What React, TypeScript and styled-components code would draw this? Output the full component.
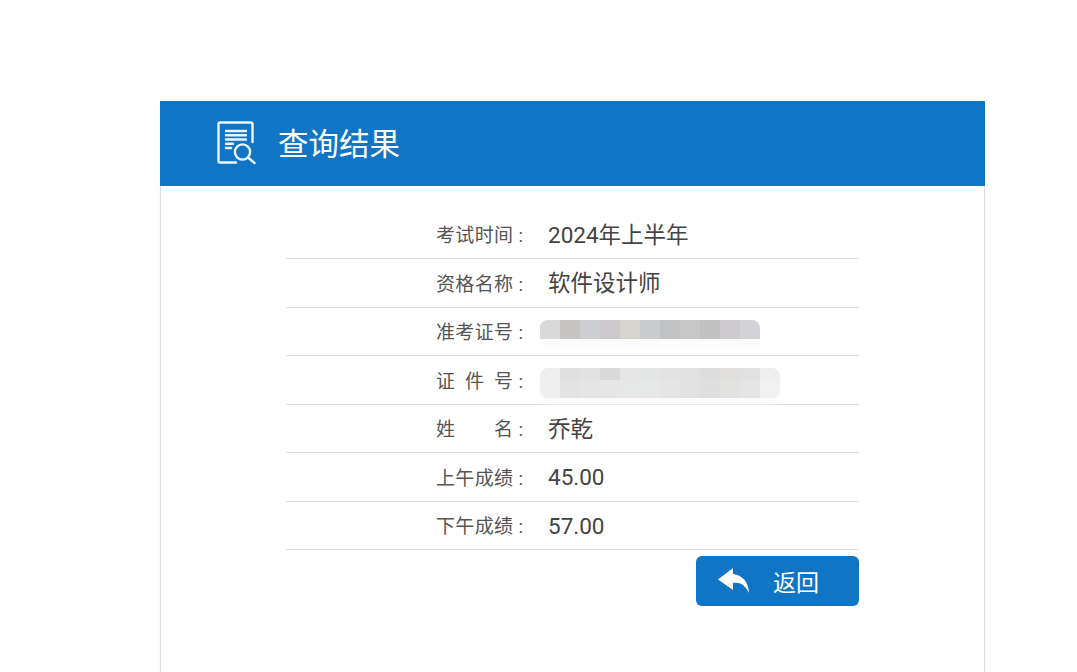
import styled, { createGlobalStyle } from 'styled-components';

const GlobalStyle = createGlobalStyle`
	html, body {
		margin: 0;
		padding: 0;
		background: #fff;
		height: 100%;
		overflow: hidden;
	}
`;

const Page = styled.div`
	padding: 101px 92px 0 160px;
	height: 672px;
	box-sizing: border-box;
	font-family: Roboto, "Noto Sans CJK SC", sans-serif;
`;

const Card = styled.div`
	width: 825px;
	height: 571px;
	display: flex;
	flex-direction: column;
`;

const Header = styled.div`
	position: relative;
	height: 85px;
	flex: none;
	padding: 0 0 3px 57px;
	box-sizing: border-box;
	background: #1075c4;
	display: flex;
	align-items: center;
	gap: 22px;
	color: #fff;
	font-size: 30.5px;
`;

const HeaderIcon = styled.svg`
	margin-top: 2px;
`;

const Panel = styled.div`
	flex: 1;
	border-left: 1px solid #e0e0e0;
	border-right: 1px solid #e0e0e0;
	box-shadow: 0 0 6px rgba(0, 0, 0, 0.04);
	padding: 24px 0 0 125px;
`;

const Body = styled.div`
	width: 573px;
`;

const Row = styled.div`
	height: 48px;
	border-bottom: 1px solid #dcdcdc;
	display: flex;
	align-items: center;
	margin-bottom: -0.5px;
`;

const Label = styled.div`
	width: 239px;
	padding: 4px 2px 0 0;
	box-sizing: border-box;
	display: flex;
	justify-content: flex-end;
	align-items: baseline;
	font-size: 19px;
	line-height: 26px;
	color: #555;
`;

const LabelText = styled.span`
	width: 77px;
	text-align: justify;
	text-align-last: justify;
`;

const Colon = styled.span`
	width: 10px;
	text-align: right;
`;

const Value = styled.div`
	margin-left: 23px;
	padding-top: 1px;
	font-size: 22.5px;
	line-height: 30px;
	color: #444;
`;

const Mosaic = styled.div<{ $top: number; $radius: string }>`
	align-self: flex-start;
	margin: ${(p) => p.$top}px 0 0 15px;
	border-radius: ${(p) => p.$radius};
	overflow: hidden;
	box-shadow: 0 6px 6px #fbfbfb;
`;

const MosaicRow = styled.div<{ $height: number }>`
	display: flex;
	height: ${(p) => p.$height}px;
`;

const Tile = styled.div<{ $color: string }>`
	width: 20px;
	background: ${(p) => p.$color};
`;

const Actions = styled.div`
	display: flex;
	justify-content: flex-end;
	padding-top: 6px;
`;

const BackButton = styled.button`
	width: 163px;
	height: 50px;
	border: none;
	border-radius: 6px;
	background: #1075c4;
	color: #fff;
	font-family: inherit;
	font-size: 23px;
	display: flex;
	align-items: center;
	padding: 0 0 0 22px;
	gap: 23px;
`;

function ResultIcon() {
	return (
		<HeaderIcon width="39" height="44" viewBox="0 0 39 44" fill="none" stroke="#f0f6fb" strokeWidth="2.4" strokeLinecap="round">
			<path d="M19 41.500H3a1.500 1.500 0 0 1-1.500-1.500V3A1.500 1.500 0 0 1 3 1.500h31A1.500 1.500 0 0 1 35.500 3v18" />
			<path d="M9 10h20M9 14.300h20M9 18.500h20M9 22.800h7M9 27h5" />
			<circle cx="25.500" cy="31" r="7.600" />
			<path d="M31 36.500l6.500 5.500" />
		</HeaderIcon>
	);
}

function ReplyIcon() {
	return (
		<svg width="32" height="25" viewBox="0 0 32 25" fill="#fff">
			<path d="M15 0L0 11.500 15 22v-7c7-1 12 2 16 10 0-3-1-17-16-19z" />
		</svg>
	);
}

const idTiles = [
	['#d9d9da', '#c6c5c3', '#ccced1', '#cbc9cc', '#d7d4d0', '#c9cbcd', '#c1c2c4', '#c6c6c7', '#c1c1c1', '#cdcbcd', '#d1d3d6'],
];

const certTiles = [
	['#efefef', '#e0e0e0', '#e2e2e2', '#dadada', '#e6e6e6', '#e4e6e6', '#e4e3e1', '#e1e1e1', '#dddddd', '#e1e0de', '#e1e1e1', '#eeeff0'],
	['#efefef', '#e3e3e3', '#e5e5e5', '#e6e6e4', '#e6e8e8', '#e7e9e9', '#e5e5e3', '#e1e1e1', '#dfdfdf', '#e2e2e0', '#e5e5e5', '#f0f1f1'],
];

function Blurred({ tiles, heights, top, radius }: { tiles: string[][]; heights: number[]; top: number; radius: string }) {
	return (
		<Mosaic $top={top} $radius={radius}>
			{tiles.map((line, i) => (
				<MosaicRow key={i} $height={heights[i]}>
					{line.map((color, j) => (
						<Tile key={j} $color={color} />
					))}
				</MosaicRow>
			))}
		</Mosaic>
	);
}

export default function App() {
	return (
		<Page>
			<GlobalStyle />
			<Card>
				<Header>
					<ResultIcon />
					<span>查询结果</span>
				</Header>
				<Panel>
					<Body>
						<Row>
							<Label><LabelText>考试时间</LabelText><Colon>:</Colon></Label>
							<Value>2024年上半年</Value>
						</Row>
						<Row>
							<Label><LabelText>资格名称</LabelText><Colon>:</Colon></Label>
							<Value>软件设计师</Value>
						</Row>
						<Row>
							<Label><LabelText>准考证号</LabelText><Colon>:</Colon></Label>
							<Blurred tiles={idTiles} heights={[19]} top={13} radius="8px 8px 0 0" />
						</Row>
						<Row>
							<Label><LabelText>证件号</LabelText><Colon>:</Colon></Label>
							<Blurred tiles={certTiles} heights={[12, 18]} top={12} radius="8px" />
						</Row>
						<Row>
							<Label><LabelText>姓名</LabelText><Colon>:</Colon></Label>
							<Value>乔乾</Value>
						</Row>
						<Row>
							<Label><LabelText>上午成绩</LabelText><Colon>:</Colon></Label>
							<Value>45.00</Value>
						</Row>
						<Row>
							<Label><LabelText>下午成绩</LabelText><Colon>:</Colon></Label>
							<Value>57.00</Value>
						</Row>
						<Actions>
							<BackButton>
								<ReplyIcon />
								<span>返回</span>
							</BackButton>
						</Actions>
					</Body>
				</Panel>
			</Card>
		</Page>
	);
}
